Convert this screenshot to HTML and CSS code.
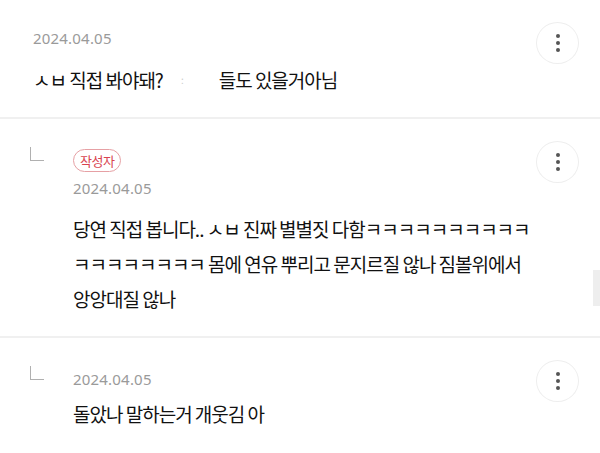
FILE: index.html
```html
<!DOCTYPE html>
<html>
<head>
  <meta charset="UTF-8">
  <title>댓글</title>
  <link rel="stylesheet" href="styles.css">
</head>
<body>
  <div class="comments">
    <div class="comment">
      <div class="content first">
        <div class="date">2024.04.05</div>
        <p class="text">ㅅㅂ 직접 봐야돼?<span class="smudge">:</span><span class="rest">들도 있을거아님</span></p>
      </div>
      <button class="more"><span></span><span></span><span></span></button>
    </div>

    <div class="comment reply">
      <div class="arrow"></div>
      <div class="content second">
        <span class="badge">작성자</span>
        <div class="date">2024.04.05</div>
        <p class="text">당연 직접 봅니다.. ㅅㅂ 진짜 별별짓 다함ㅋㅋㅋㅋㅋㅋㅋㅋㅋㅋ ㅋㅋㅋㅋㅋㅋㅋㅋ 몸에 연유 뿌리고 문지르질 않나 짐볼위에서 앙앙대질 않나</p>
      </div>
      <button class="more"><span></span><span></span><span></span></button>
    </div>

    <div class="comment reply last">
      <div class="arrow"></div>
      <div class="content third">
        <div class="date">2024.04.05</div>
        <p class="text">돌았나 말하는거 개웃김 아</p>
      </div>
      <button class="more"><span></span><span></span><span></span></button>
    </div>
  </div>
  <div class="scroll"></div>
</body>
</html>
```

FILE: styles.css
```css
* {
  box-sizing: border-box;
}
body {
  margin: 0;
  background: #fff;
  font-family: "Noto Sans CJK KR", "Noto Sans", sans-serif;
  color: #111;
  overflow: hidden;
}
.comment {
  display: flex;
  align-items: flex-start;
  padding: 22px 21px 20px 33px;
  border-bottom: 2px solid #f0f0f0;
}
.comment.last {
  border-bottom: none;
}
.reply {
  padding-left: 30px;
}
.arrow {
  flex: none;
  width: 14px;
  height: 14px;
  margin-top: 6px;
  margin-right: 29px;
  border-left: 1.5px solid #b0b0b0;
  border-bottom: 1.5px solid #b0b0b0;
}
.content {
  flex: 1;
}
.first {
  margin-top: 5px;
}
.second {
  margin-top: 6px;
}
.third {
  margin-top: 8px;
}
.date {
  font-family: "Noto Sans", sans-serif;
  font-size: 15px;
  line-height: 22px;
  color: #9a9a9a;
  letter-spacing: 0.2px;
}
.badge {
  display: inline-block;
  height: 23px;
  padding: 0 6px;
  border: 1px solid #e6a0a4;
  border-radius: 12px;
  color: #d9434f;
  font-size: 13px;
  line-height: 21px;
  letter-spacing: -0.5px;
  margin-bottom: 5px;
}
.text {
  margin: 13px 0 0;
  font-size: 19px;
  line-height: 35px;
  letter-spacing: -1px;
}
.second .text {
  margin-top: 12px;
}
.third .text {
  margin-top: 6px;
}
.smudge {
  color: #ccc;
  font-size: 10px;
  margin-left: 18px;
  vertical-align: 4px;
}
.rest {
  margin-left: 36px;
}
.more {
  flex: none;
  width: 43px;
  height: 42px;
  border: 1px solid #eee;
  border-radius: 50%;
  background: #fff;
  padding: 0;
  display: flex;
  flex-direction: column;
  align-items: center;
  justify-content: center;
  gap: 3px;
}
.more span {
  width: 4px;
  height: 4px;
  border-radius: 50%;
  background: #555;
}
.scroll {
  position: absolute;
  right: 0;
  top: 270px;
  width: 7px;
  height: 36px;
  background: #eee;
}
```
